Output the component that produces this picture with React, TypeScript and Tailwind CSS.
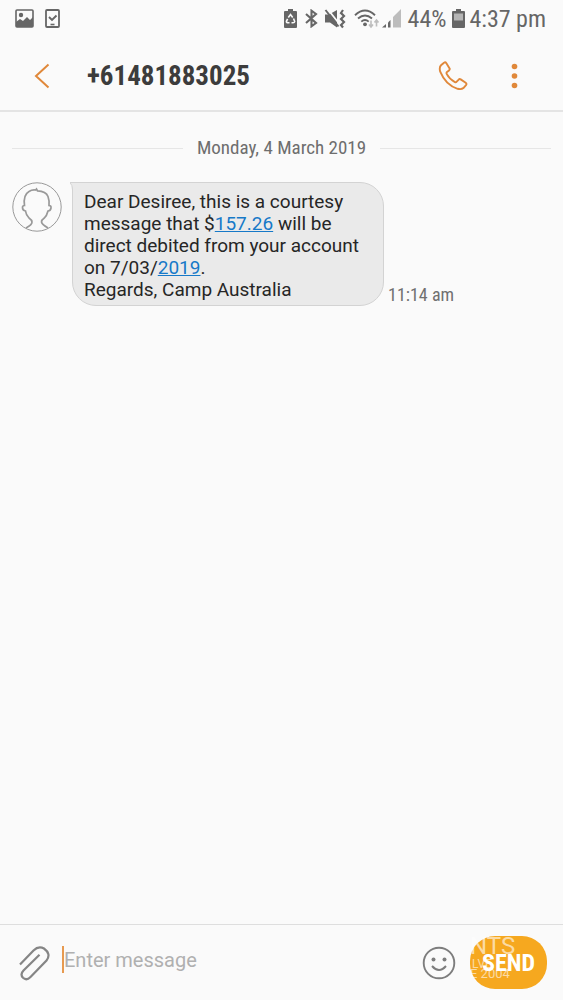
import React from "react";

const condensed = "font-['Roboto_Condensed','Liberation_Sans_Narrow',Roboto,sans-serif]";

function ImageIcon() {
  return (
    <svg width="19" height="19" viewBox="0 0 19 19" aria-hidden="true">
      <rect x="1" y="1" width="17" height="17" rx="1" fill="none" stroke="currentColor" strokeWidth="1.6" />
      <circle cx="6" cy="6" r="2.2" fill="currentColor" />
      <path d="M1 13 5 10 8 12 12 8 15 11 18 8V18H1Z" fill="currentColor" />
    </svg>
  );
}

function TaskIcon() {
  return (
    <svg width="15" height="19" viewBox="0 0 15 19" aria-hidden="true" fill="none" stroke="currentColor">
      <rect x="1" y="1" width="13" height="17" rx="1" strokeWidth="1.8" />
      <path d="M4 8 7 11 11.5 6.5" strokeWidth="1.9" />
      <path d="M5.5 15.5H9.5" strokeWidth="1.6" />
    </svg>
  );
}

function RecycleBatteryIcon() {
  return (
    <svg width="13" height="19" viewBox="0 0 13 19" aria-hidden="true">
      <path d="M4 0H9V2H12Q13 2 13 3V18Q13 19 12 19H1Q0 19 0 18V3Q0 2 1 2H4Z" fill="currentColor" />
      <path d="M4.3 8.5 6.5 5.5 8.7 8.5M9.5 9.5 10.7 12.5Q10.5 13.8 9 13.8H7.5M5.5 13.8H4Q2.3 13.8 2.4 12.3L3.6 9.8" fill="none" stroke="#fafafa" strokeWidth="1.6" />
    </svg>
  );
}

function BluetoothIcon() {
  return (
    <svg width="13" height="19" viewBox="0 0 13 19" aria-hidden="true" fill="none" stroke="currentColor" strokeWidth="2.1">
      <path d="M1 5 11 14 6.5 17.3V1.7L11 5 1 14" />
    </svg>
  );
}

function MuteVibrateIcon() {
  return (
    <svg width="22" height="20" viewBox="0 0 22 20" aria-hidden="true">
      <path d="M1 5.5H5L13 1V18.5L6 13.5H1Z" fill="currentColor" />
      <path d="M3.5 0 15.5 15" stroke="#fafafa" strokeWidth="1.8" />
      <path d="M1.5 1 14.5 17.5" stroke="currentColor" strokeWidth="2" />
      <path d="M19 1 17 4 20 7 17 10 20 13 17 16 19 18.5" stroke="currentColor" strokeWidth="2.2" fill="none" />
    </svg>
  );
}

function WifiIcon() {
  return (
    <svg width="26" height="20" viewBox="0 0 26 20" aria-hidden="true" fill="none">
      <g stroke="currentColor" strokeWidth="1.9">
        <path d="M1 6.2Q11-3 21 6.2" />
        <path d="M4 9.5Q11 3.5 18 9.5" />
        <path d="M7.3 12.6Q11 9.2 14.7 12.6" />
      </g>
      <circle cx="11" cy="15.3" r="1.9" fill="currentColor" />
      <path d="M17 11.5V17.5M15 15.5 17 18 19 15.5M22.5 17.5V11.5M20.5 13.5 22.5 11 24.5 13.5" stroke="#bdbdbd" strokeWidth="1.6" />
    </svg>
  );
}

function SignalIcon() {
  return (
    <svg width="20" height="19" viewBox="0 0 20 19" aria-hidden="true">
      <path d="M0 18.5 4 15V18.5Z" fill="currentColor" />
      <path d="M6 13.5 8.5 11V18.5H6Z" fill="currentColor" />
      <path d="M11 8 13.5 5.5V18.5H11ZM13.5 5.5 19 0V18.5H13.5Z" fill="#bdbdbd" />
    </svg>
  );
}

function BatteryIcon() {
  return (
    <svg width="13" height="19" viewBox="0 0 13 19" aria-hidden="true">
      <path d="M4 0H9V2H12Q13 2 13 3V18Q13 19 12 19H1Q0 19 0 18V3Q0 2 1 2H4Z" fill="currentColor" />
      <path d="M2 4.5H11V11.5H2Z" fill="#b5b5b5" />
    </svg>
  );
}

function StatusBar() {
  return (
    <div className="flex h-[37px] items-center justify-between pr-[17px] pl-[15px] text-[#666]">
      <div className="flex items-center gap-[11px]">
        <ImageIcon />
        <TaskIcon />
      </div>
      <div className={`flex items-center text-2xl ${condensed}`}>
        <RecycleBatteryIcon />
        <span className="ml-2"><BluetoothIcon /></span>
        <span className="ml-1.5"><MuteVibrateIcon /></span>
        <span className="ml-2"><WifiIcon /></span>
        <span className="ml-0.5"><SignalIcon /></span>
        <span className="ml-1.5">44%</span>
        <span className="ml-1.5"><BatteryIcon /></span>
        <time className="ml-1">4:37 pm</time>
      </div>
    </div>
  );
}

function Header() {
  return (
    <header className="border-b-2 border-[#e4e4e4]">
      <StatusBar />
      <div className="flex h-[73px] items-center pt-1 pr-11 pl-[34px] text-[#e0883a]">
        <button type="button" aria-label="Back" className="w-[53px]">
          <svg width="16" height="26" viewBox="0 0 16 26" fill="none" stroke="currentColor" strokeWidth="2">
            <path d="M14.5 1.5 2 13 14.5 24.5" />
          </svg>
        </button>
        <h1 className={`flex-1 text-[27px] leading-8 font-bold text-[#3c3c3c] ${condensed}`}>+61481883025</h1>
        <button type="button" aria-label="Call">
          <svg width="30" height="30" viewBox="0 0 30 30" fill="none" stroke="currentColor" strokeWidth="1.9" strokeLinejoin="round">
            <path d="M3 4.3 6 1.7Q7.4.8 8.4 2.2L11.6 7.4Q12.1 8.5 11 9.4L8.7 11.2Q8.2 12 8.8 13.1 11.7 18.4 16.9 21.1 18 21.5 18.7 20.7L20.7 18.6Q21.5 17.7 22.7 18.4L27.7 21.8Q29 22.8 28 24.1L25.4 27.1Q23.5 28.7 19.6 27.8 7.8 24.3 2.2 10.7 1 6.2 3 4.3Z" />
          </svg>
        </button>
        <button type="button" aria-label="More options" className="ml-[42px]">
          <svg width="9" height="26" viewBox="0 0 9 26" fill="currentColor">
            <circle cx="4.5" cy="3.5" r="2.8" />
            <circle cx="4.5" cy="13" r="2.8" />
            <circle cx="4.5" cy="22.5" r="2.8" />
          </svg>
        </button>
      </div>
    </header>
  );
}

function Avatar() {
  return (
    <svg className="shrink-0" width="50" height="50" viewBox="0 0 50 50" fill="none" stroke="#999" aria-hidden="true">
      <circle cx="25" cy="25" r="24.2" strokeWidth="1" />
      <path
        d="M14 46Q20 43 20 40 20 38 17 36 14 33 13.5 29 10.5 28.5 10.5 25.5 10.5 23.5 12.5 23.5 11 13 17 9.5 20 7.5 23.5 8L24.5 7 25.5 8.8Q34 9 36 14.5 37.5 18.5 37 23.5 39.3 23.5 39 26 38.5 28.8 36 29 35 33.5 32 36.3 29.5 38 29.5 40 30 42.5 36 46"
        strokeWidth="1.7"
      />
    </svg>
  );
}

function Message() {
  return (
    <article className="flex items-start pl-3">
      <Avatar />
      <div className="relative ml-2.5 w-[312px] rounded-[24px] rounded-tl-none border border-[#d3d3d3] bg-[#eaeaea] pt-2 pb-1 pl-[11px] text-[19px] leading-[22px] text-[#262626]">
        <svg className="absolute -top-px -left-[3px]" width="6" height="16" viewBox="0 0 6 16" aria-hidden="true">
          <path d="M0 .5H6V16H2.5V8Q2.5 3 0 .5Z" fill="#eaeaea" />
          <path d="M6 .5H0Q2.5 3 2.5 8V16" fill="none" stroke="#d3d3d3" />
        </svg>
        <p>
          Dear Desiree, this is a courtesy
          <br />
          message that $<a href="#amount" className="text-[#1679c8] underline">157.26</a> will be
          <br />
          direct debited from your account
          <br />
          on 7/03/<a href="#date" className="text-[#1679c8] underline">2019</a>.
          <br />
          Regards, Camp Australia
        </p>
      </div>
      <time className={`ml-1 self-end text-lg leading-[22px] text-[#707070] ${condensed}`}>11:14 am</time>
    </article>
  );
}

function Composer() {
  return (
    <form className="flex h-[76px] items-center border-t border-[#dedede] pr-4 pl-[18px]" onSubmit={(e) => e.preventDefault()}>
      <button type="button" aria-label="Attach" className="text-[#858585]">
        <svg width="33" height="36" viewBox="0 0 33 36" fill="none" stroke="currentColor" strokeWidth="2.2">
          <path d="M2 19.5 15.5 5.5Q20.5.5 26 3.5 33.5 9 28.5 15.5L12.5 32Q8.5 36 5 32.8 1.8 29.3 5.5 25.5L21.5 9.8" />
        </svg>
      </button>
      <div className="mb-1.5 ml-[11px] flex h-[27px] flex-1 items-center border-l-2 border-[#e79a50]">
        <input
          type="text"
          aria-label="Message"
          placeholder="Enter message"
          className="w-full min-w-0 bg-transparent text-xl text-[#262626] outline-none placeholder:text-[#b0b0b0]"
        />
      </div>
      <button type="button" aria-label="Emoji" className="text-[#7d7d7d]">
        <svg width="34" height="34" viewBox="0 0 34 34" fill="none" stroke="currentColor" strokeWidth="1.9">
          <circle cx="17" cy="17" r="15.3" />
          <path d="M10 20Q17 28 24 20" />
          <circle cx="11.5" cy="13.5" r="2" fill="currentColor" stroke="none" />
          <circle cx="22.5" cy="13.5" r="2" fill="currentColor" stroke="none" />
        </svg>
      </button>
      <div className="relative ml-[14px]">
        <button type="submit" className={`h-[53px] w-[77px] rounded-[25px] bg-[#f6a81f] text-2xl font-bold text-white ${condensed}`}>
          SEND
        </button>
        <div className="pointer-events-none absolute inset-0 text-white/60">
          <div className="absolute -top-0.5 left-0 text-2xl leading-6">NTS</div>
          <div className="absolute top-[22px] left-0.5 text-xs leading-3">LVE</div>
          <div className="absolute top-8 left-0 text-[13px] leading-3">E 2004</div>
        </div>
      </div>
    </form>
  );
}

export default function App() {
  return (
    <div className="flex min-h-screen flex-col bg-[#fafafa] font-[Roboto,sans-serif]">
      <Header />
      <main className="flex-1">
        <div className={`flex h-[70px] items-center gap-[14px] px-3 pt-0.5 text-[19px] text-[#6e6e6e] ${condensed}`}>
          <span className="h-px flex-1 bg-[#e6e6e6]" />
          <h2>Monday, 4 March 2019</h2>
          <span className="h-px flex-1 bg-[#e6e6e6]" />
        </div>
        <Message />
      </main>
      <Composer />
    </div>
  );
}
